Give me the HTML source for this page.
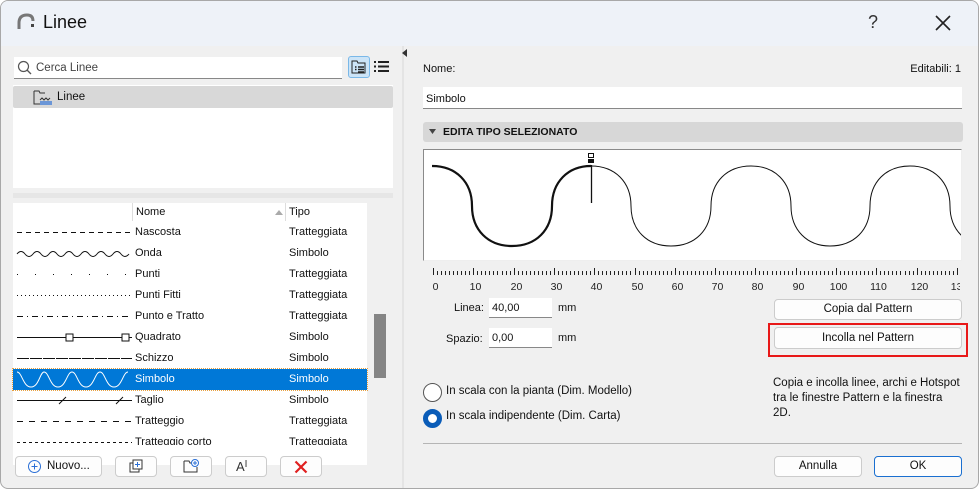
<!DOCTYPE html>
<html><head><meta charset="utf-8"><style>
*{box-sizing:border-box;margin:0;padding:0}
body{width:979px;height:489px;overflow:hidden;background:#fff;font-family:"Liberation Sans",sans-serif;font-size:11px;color:#111}
#win{position:absolute;left:0;top:0;width:979px;height:489px;border:1px solid #a8a8a8;border-radius:8px;background:#f0f0f0;overflow:hidden}
#title{position:absolute;left:0;top:0;width:979px;height:45px;background:#eef2f8}
.a{position:absolute}
.inp{position:absolute;background:#fff;border-bottom:1px solid #888}
.btn{position:absolute;background:#fdfdfd;border:1px solid #ccc;border-radius:4px;text-align:center;font-size:11.5px}
.row{position:absolute;left:12px;width:354px;height:21px}
.row .n{position:absolute;left:122px;top:4px}
.row .t{position:absolute;left:276px;top:4px}
.row svg{position:absolute;left:3px;top:0}
</style></head><body><div id="win">
<div id="title">
<svg class="a" style="left:15px;top:11px" width="20" height="20"><path d="M3 17 L3 11 Q3 3 11 3 Q17 3 17 9" fill="none" stroke="#777" stroke-width="3"/><rect x="15" y="12" width="3" height="3" fill="#444"/></svg>
<div class="a" style="left:42px;top:11px;font-size:18px">Linee</div>
<div class="a" style="left:867px;top:11px;font-size:18px;color:#333">?</div>
<svg class="a" style="left:933px;top:13px" width="18" height="18"><path d="M2 2L16 16M16 2L2 16" stroke="#222" stroke-width="1.6"/></svg>
</div>
<!-- left -->
<div class="inp" style="left:13px;top:56px;width:328px;height:22px"></div>
<svg class="a" style="left:16px;top:59px" width="16" height="16"><circle cx="6.5" cy="6.5" r="5" fill="none" stroke="#555" stroke-width="1.2"/><path d="M10 10L14 14" stroke="#555" stroke-width="1.3"/></svg>
<div class="a" style="left:35px;top:61px;color:#444;font-size:11.5px">Cerca Linee</div>
<div class="a" style="left:347px;top:55px;width:22px;height:22px;background:#cce4f7;border:1px solid #7ab8e8;border-radius:3px"></div>
<svg class="a" style="left:349px;top:58px" width="18" height="16"><path d="M2 2H7L8 4H15V14H2Z" fill="none" stroke="#222"/><path d="M8 8H14M8 10.5H14M8 13H14M5 8H6.5M5 10.5H6.5" stroke="#222" stroke-width="1.5"/></svg>
<svg class="a" style="left:372px;top:59px" width="17" height="14"><path d="M1 2H3M5 2H16M1 6.5H3M5 6.5H16M1 11H3M5 11H16" stroke="#222" stroke-width="2"/></svg>
<div class="a" style="left:12px;top:84px;width:380px;height:103px;background:#fff"></div>
<div class="a" style="left:12px;top:85px;width:380px;height:22px;background:#d8d8d8;border-radius:2px"></div>
<svg class="a" style="left:32px;top:88px" width="20" height="18"><path d="M1 2H6L7 4H12M1 2V15H8" fill="none" stroke="#333"/><path d="M7 11L9 9L11 11L13 9L15 11L17 9" fill="none" stroke="#333"/><path d="M7 13H19M7 15H19" stroke="#2a6fd6" stroke-width="1.3"/></svg>
<div class="a" style="left:56px;top:90px;font-size:11.5px">Linee</div>
<div class="a" style="left:12px;top:192px;width:380px;height:5px;background:#e6e6e6"></div>
<div class="a" style="left:12px;top:202px;width:354px;height:262px;background:#fff"></div>
<div class="a" style="left:131px;top:202px;width:1px;height:18px;background:#ddd"></div>
<div class="a" style="left:284px;top:202px;width:1px;height:18px;background:#ddd"></div>
<div class="a" style="left:135px;top:205px">Nome</div>
<svg class="a" style="left:273px;top:208px" width="10" height="7"><path d="M1 6L5 1L9 6Z" fill="#aaa"/></svg>
<div class="a" style="left:288px;top:205px">Tipo</div>
<div class="a" style="left:373px;top:313px;width:12px;height:64px;background:#858585"></div>

<div class="row" style="top:221px"><svg width="118" height="21"><path d="M1 10.5H116" stroke="#111" stroke-dasharray="5 4"/></svg><span class="n">Nascosta</span><span class="t">Tratteggiata</span></div>
<div class="row" style="top:242px"><svg width="118" height="21"><path d="M1 11 q4 -5 8 0 t8 0 t8 0 t8 0 t8 0 t8 0 t8 0 t8 0 t8 0 t8 0 t8 0 t8 0 t8 0 t8 0" fill="none" stroke="#111"/></svg><span class="n">Onda</span><span class="t">Simbolo</span></div>
<div class="row" style="top:263px"><svg width="118" height="21"><path d="M1 10.5H116" stroke="#111" stroke-dasharray="1 17"/></svg><span class="n">Punti</span><span class="t">Tratteggiata</span></div>
<div class="row" style="top:284px"><svg width="118" height="21"><path d="M1 10.5H116" stroke="#111" stroke-dasharray="1 3"/></svg><span class="n">Punti Fitti</span><span class="t">Tratteggiata</span></div>
<div class="row" style="top:305px"><svg width="118" height="21"><path d="M1 10.5H116" stroke="#111" stroke-dasharray="6 4 1 4"/></svg><span class="n">Punto e Tratto</span><span class="t">Tratteggiata</span></div>
<div class="row" style="top:326px"><svg width="118" height="21"><path d="M1 10.5H116" stroke="#111"/><rect x="50" y="7" width="7" height="7" fill="#fff" stroke="#111"/><rect x="106" y="7" width="7" height="7" fill="#fff" stroke="#111"/></svg><span class="n">Quadrato</span><span class="t">Simbolo</span></div>
<div class="row" style="top:347px"><svg width="118" height="21"><path d="M1 10.5H116" stroke="#111" stroke-dasharray="12 1"/></svg><span class="n">Schizzo</span><span class="t">Simbolo</span></div>
<div class="row" style="top:368px;background:#0078d7;color:#fff;outline:1px dotted #e8a040"><svg width="118" height="21"><path d="M1 3 C6 3 7 18 15 18 C23 18 24 3 28 3 C33 3 34 18 42 18 C50 18 51 3 56 3 C61 3 62 18 70 18 C78 18 79 3 84 3 C89 3 90 18 98 18 C106 18 107 3 112 3" fill="none" stroke="#fff"/></svg><span class="n">Simbolo</span><span class="t">Simbolo</span></div>
<div class="row" style="top:389px"><svg width="118" height="21"><path d="M1 10.5H116M43 14L50 7M100 14L107 7" stroke="#111"/></svg><span class="n">Taglio</span><span class="t">Simbolo</span></div>
<div class="row" style="top:410px"><svg width="118" height="21"><path d="M1 10.5H116" stroke="#111" stroke-dasharray="6 6"/></svg><span class="n">Tratteggio</span><span class="t">Tratteggiata</span></div>
<div class="row" style="top:431px;height:13px;overflow:hidden"><svg width="118" height="21"><path d="M1 10.5H116" stroke="#111" stroke-dasharray="3 3"/></svg><span class="n">Tratteggio corto</span><span class="t">Tratteggiata</span></div>

<div class="btn" style="left:14px;top:455px;width:87px;height:21px"></div>
<svg class="a" style="left:26px;top:458px" width="15" height="15"><circle cx="7.5" cy="7.5" r="6" fill="none" stroke="#2a6fd6"/><path d="M7.5 4.5V10.5M4.5 7.5H10.5" stroke="#2a6fd6"/></svg>
<div class="a" style="left:46px;top:459px;font-size:11.5px">Nuovo...</div>
<div class="btn" style="left:114px;top:455px;width:42px;height:21px"></div>
<svg class="a" style="left:127px;top:457px" width="16" height="16"><rect x="2" y="5" width="9" height="9" fill="#fff" stroke="#333"/><rect x="5" y="2" width="9" height="9" fill="#fff" stroke="#333"/><path d="M9.5 4V9M7 6.5H12" stroke="#2a6fd6"/></svg>
<div class="btn" style="left:169px;top:455px;width:42px;height:21px"></div>
<svg class="a" style="left:181px;top:457px" width="18" height="16"><path d="M2 3H7L8 5H10M2 3V14H15V9" fill="none" stroke="#333"/><circle cx="13" cy="5" r="3.5" fill="#fff" stroke="#2a6fd6"/><path d="M13 3V7M11 5H15" stroke="#2a6fd6"/></svg>
<div class="btn" style="left:224px;top:455px;width:42px;height:21px"></div>
<div class="a" style="left:235px;top:458px;font-size:13px;color:#333">A<span style="font-size:10px;vertical-align:4px">I</span></div>
<div class="btn" style="left:279px;top:455px;width:42px;height:21px"></div>
<svg class="a" style="left:293px;top:459px" width="14" height="14"><path d="M1.5 1.5L12.5 12.5M12.5 1.5L1.5 12.5" stroke="#e02020" stroke-width="2.2"/></svg>

<!-- divider -->
<div class="a" style="left:401px;top:45px;width:2px;height:444px;background:#e4e4e4"></div>
<svg class="a" style="left:401px;top:48px" width="6" height="8"><path d="M5 0V8L0 4Z" fill="#333"/></svg>

<!-- right -->
<div class="a" style="left:422px;top:62px">Nome:</div>
<div class="a" style="right:17px;top:62px">Editabili: 1</div>
<div class="inp" style="left:422px;top:86px;width:539px;height:22px"></div>
<div class="a" style="left:425px;top:92px">Simbolo</div>
<div class="a" style="left:422px;top:121px;width:540px;height:20px;background:#d7d7d7;border-radius:3px"></div>
<svg class="a" style="left:428px;top:128px" width="8" height="6"><path d="M0 0H7L3.5 5Z" fill="#444"/></svg>
<div class="a" style="left:442px;top:125px;font-weight:bold;font-size:10.5px">EDITA TIPO SELEZIONATO</div>
<div class="a" style="left:422px;top:148px;width:539px;height:112px;background:#fff;border:1px solid #8a8a8a;border-right-color:#eee;border-bottom-color:#eee"></div>
<svg class="a" style="left:0;top:0" width="979" height="300" id="g">
<defs><clipPath id="c"><rect x="423" y="149" width="537" height="110"/></clipPath><clipPath id="c2"><rect x="420" y="260" width="539" height="40"/></clipPath></defs>
<g clip-path="url(#c)" fill="none" stroke="#111">
<path d="M431 165 C455 165 471 181 471 205 C471 229 487 245 511 245 C535 245 551 229 551 205 C551 181 567 165 590 165" stroke-width="2.2"/>
<path d="M590 165 C614 165 630 181 630 205 C630 229 646 245 670 245 C694 245 710 229 710 205 C710 181 726 165 750 165 C774 165 790 181 790 205 C790 229 806 245 829 245 C853 245 869 229 869 205 C869 181 885 165 909 165 C933 165 949 181 949 205 C949 229 965 245 989 245" stroke-width="1"/>
</g>
<path d="M590.5 164V202" stroke="#111" stroke-width="1.3"/>
<rect x="587.5" y="152.5" width="5" height="4" fill="#fff" stroke="#111"/>
<rect x="587" y="158" width="6" height="4" fill="#111"/>
<g clip-path="url(#c2)"><g id="ticks" stroke="#222" stroke-width="1"></g>
<g id="lbl" font-family="Liberation Sans" font-size="10.5" fill="#222"></g></g>
</svg>
<script>
var t=document.getElementById('ticks'),l=document.getElementById('lbl'),s='',q='';
for(var i=0;i<=130;i++){var x=Math.round(432+i*4.03)+0.5;if(x>959)break;var big=i%10==0;s+='<path d="M'+x+' '+(big?267:270)+'V274"/>';if(big){q+='<text x="'+(x+2)+'" y="289" text-anchor="middle">'+i+'</text>';}}
t.innerHTML=s;l.innerHTML=q;
</script>
<div class="a" style="left:453px;top:301px">Linea:</div>
<div class="inp" style="left:488px;top:297px;width:63px;height:20px"></div>
<div class="a" style="left:491px;top:301px">40,00</div>
<div class="a" style="left:557px;top:301px">mm</div>
<div class="a" style="left:445px;top:332px">Spazio:</div>
<div class="inp" style="left:488px;top:327px;width:63px;height:20px"></div>
<div class="a" style="left:491px;top:331px">0,00</div>
<div class="a" style="left:557px;top:331px">mm</div>
<div class="btn" style="left:773px;top:298px;width:188px;height:21px;line-height:19px">Copia dal Pattern</div>
<div class="a" style="left:767px;top:322px;width:200px;height:34px;border:2px solid #e81818"></div>
<div class="btn" style="left:773px;top:326px;width:188px;height:22px;line-height:20px">Incolla nel Pattern</div>
<div class="a" style="left:422px;top:382px;width:19px;height:19px;border-radius:50%;border:1.5px solid #555;background:#fff"></div>
<div class="a" style="left:445px;top:384px;font-size:11.5px">In scala con la pianta (Dim. Modello)</div>
<div class="a" style="left:422px;top:408px;width:19px;height:19px;border-radius:50%;border:5px solid #0a5cb8;background:#fff"></div>
<div class="a" style="left:445px;top:409px;font-size:11.5px">In scala indipendente (Dim. Carta)</div>
<div class="a" style="left:772px;top:375px;font-size:11.5px;line-height:15px">Copia e incolla linee, archi e Hotspot<br>tra le finestre Pattern e la finestra<br>2D.</div>
<div class="a" style="left:422px;top:442px;width:539px;height:1px;background:#b5b5b5"></div>
<div class="btn" style="left:773px;top:455px;width:88px;height:21px;line-height:19px">Annulla</div>
<div class="btn" style="left:873px;top:455px;width:88px;height:21px;line-height:19px;border-color:#1a6fd0">OK</div>
</div></body></html>
